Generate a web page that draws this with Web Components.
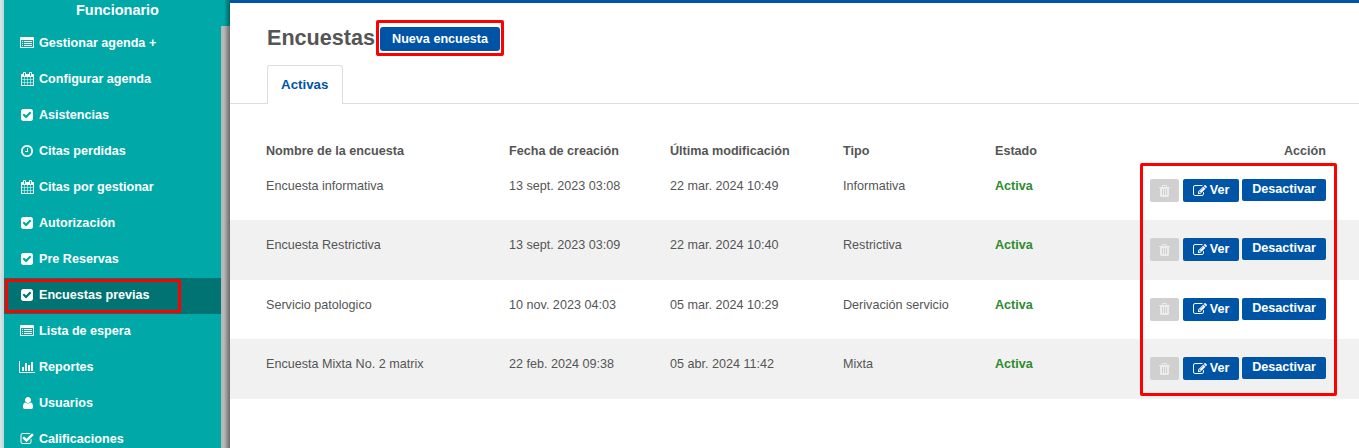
<!DOCTYPE html>
<html lang="es">
<head>
<meta charset="utf-8">
<title>Encuestas</title>
<style>
  html, body { margin: 0; height: 100%; overflow: hidden; }
  body { font-family: "Liberation Sans", Arial, sans-serif; background: #fff; }
</style>
</head>
<body>
<app-shell>
  <side-nav slot="side" heading="Funcionario">
    <nav-item icon="listAlt">Gestionar agenda +</nav-item>
    <nav-item icon="calendar">Configurar agenda</nav-item>
    <nav-item icon="checkSquare">Asistencias</nav-item>
    <nav-item icon="clock">Citas perdidas</nav-item>
    <nav-item icon="calendar">Citas por gestionar</nav-item>
    <nav-item icon="checkSquare">Autorización</nav-item>
    <nav-item icon="checkSquare">Pre Reservas</nav-item>
    <nav-item icon="checkSquare" active marked>Encuestas previas</nav-item>
    <nav-item icon="listAlt">Lista de espera</nav-item>
    <nav-item icon="barChart">Reportes</nav-item>
    <nav-item icon="user">Usuarios</nav-item>
    <nav-item icon="checkSquareO">Calificaciones</nav-item>
  </side-nav>
  <survey-page>
    <survey-row name="Encuesta informativa" created="13 sept. 2023 03:08" modified="22 mar. 2024 10:49" kind="Informativa"></survey-row>
    <survey-row shaded name="Encuesta Restrictiva" created="13 sept. 2023 03:09" modified="22 mar. 2024 10:40" kind="Restrictiva"></survey-row>
    <survey-row name="Servicio patologico" created="10 nov. 2023 04:03" modified="05 mar. 2024 10:29" kind="Derivación servicio"></survey-row>
    <survey-row shaded name="Encuesta Mixta No. 2 matrix" created="22 feb. 2024 09:38" modified="05 abr. 2024 11:42" kind="Mixta"></survey-row>
  </survey-page>
</app-shell>

<script>
// FontAwesome 4 shapes, redrawn as svg paths
const ICONS = {
  listAlt: [1792, "M384 1184v64q0 13-9.5 22.5t-22.5 9.5h-64q-13 0-22.5-9.5t-9.5-22.5v-64q0-13 9.5-22.5t22.5-9.5h64q13 0 22.5 9.5t9.5 22.5zm0-256v64q0 13-9.5 22.5t-22.5 9.5h-64q-13 0-22.5-9.5t-9.5-22.5v-64q0-13 9.5-22.5t22.5-9.5h64q13 0 22.5 9.5t9.5 22.5zm0-256v64q0 13-9.5 22.5t-22.5 9.5h-64q-13 0-22.5-9.5t-9.5-22.5v-64q0-13 9.5-22.5t22.5-9.5h64q13 0 22.5 9.5t9.5 22.5zm1152 512v64q0 13-9.5 22.5t-22.5 9.5h-960q-13 0-22.5-9.5t-9.5-22.5v-64q0-13 9.5-22.5t22.5-9.5h960q13 0 22.5 9.5t9.5 22.5zm0-256v64q0 13-9.5 22.5t-22.5 9.5h-960q-13 0-22.5-9.5t-9.5-22.5v-64q0-13 9.5-22.5t22.5-9.5h960q13 0 22.5 9.5t9.5 22.5zm0-256v64q0 13-9.5 22.5t-22.5 9.5h-960q-13 0-22.5-9.5t-9.5-22.5v-64q0-13 9.5-22.5t22.5-9.5h960q13 0 22.5 9.5t9.5 22.5zm128 704v-832q0-13-9.5-22.5t-22.5-9.5h-1472q-13 0-22.5 9.5t-9.5 22.5v832q0 13 9.5 22.5t22.5 9.5h1472q13 0 22.5-9.5t9.5-22.5zm128-1088v1088q0 66-47 113t-113 47h-1472q-66 0-113-47t-47-113v-1088q0-66 47-113t113-47h1472q66 0 113 47t47 113z"],
  calendar: [1664, "M128 1664h288v-288h-288v288zm352 0h320v-288h-320v288zm-352-352h288v-320h-288v320zm352 0h320v-320h-320v320zm-352-384h288v-288h-288v288zm736 736h320v-288h-320v288zm-384-736h320v-288h-320v288zm768 736h288v-288h-288v288zm-384-352h320v-320h-320v320zm-352-864v-288q0-13-9.5-22.5t-22.5-9.5h-64q-13 0-22.5 9.5t-9.5 22.5v288q0 13 9.5 22.5t22.5 9.5h64q13 0 22.5-9.5t9.5-22.5zm736 864h288v-320h-288v320zm-384-384h320v-288h-320v288zm384 0h288v-288h-288v288zm32-480v-288q0-13-9.5-22.5t-22.5-9.5h-64q-13 0-22.5 9.5t-9.5 22.5v288q0 13 9.5 22.5t22.5 9.5h64q13 0 22.5-9.5t9.5-22.5zm384-64v1280q0 52-38 90t-90 38h-1408q-52 0-90-38t-38-90v-1280q0-52 38-90t90-38h128v-96q0-66 47-113t113-47h64q66 0 113 47t47 113v96h384v-96q0-66 47-113t113-47h64q66 0 113 47t47 113v96h128q52 0 90 38t38 90z"],
  checkSquare: [1536, "M685 1299l614-614q19-19 19-45t-19-45l-102-102q-19-19-45-19t-45 19l-467 467-211-211q-19-19-45-19t-45 19l-102 102q-19 19-19 45t19 45l358 358q19 19 45 19t45-19zm851-883v960q0 119-84.5 203.5t-203.5 84.5h-960q-119 0-203.5-84.5t-84.5-203.5v-960q0-119 84.5-203.5t203.5-84.5h960q119 0 203.5 84.5t84.5 203.5z"],
  checkSquareO: [1792, "M1472 930v318q0 119-84.5 203.5t-203.5 84.5h-832q-119 0-203.5-84.5t-84.5-203.5v-832q0-119 84.5-203.5t203.5-84.5h832q63 0 117 25 15 7 18 23 3 17-9 29l-49 49q-10 10-23 10-3 0-9-2-23-6-45-6h-832q-66 0-113 47t-47 113v832q0 66 47 113t113 47h832q66 0 113-47t47-113v-254q0-13 9-22l64-64q10-10 23-10 6 0 12 3 20 8 20 29zm231-489l-814 814q-24 24-57 24t-57-24l-430-430q-24-24-24-57t24-57l110-110q24-24 57-24t57 24l263 263 647-647q24-24 57-24t57 24l110 110q24 24 24 57t-24 57z"],
  clock: [1536, "M896 544v448q0 14-9 23t-23 9h-320q-14 0-23-9t-9-23v-64q0-14 9-23t23-9h224v-352q0-14 9-23t23-9h64q14 0 23 9t9 23zm416 352q0-148-73-273t-198-198-273-73-273 73-198 198-73 273 73 273 198 198 273 73 273-73 198-198 73-273zm224 0q0 209-103 385.5t-279.5 279.5-385.5 103-385.5-103-279.5-279.5-103-385.5 103-385.5 279.5-279.5 385.5-103 385.5 103 279.5 279.5 103 385.5z"],
  barChart: [2048, "M640 896v512h-256v-512h256zm384-512v1024h-256v-1024h256zm1024 1152v128h-2048v-1536h128v1408h1920zm-640-896v768h-256v-768h256zm384-384v1152h-256v-1152h256z"],
  user: [1408, "M1408 1399q0 109-62.5 187t-150.5 78h-854q-88 0-150.5-78t-62.5-187q0-85 8.5-160.5t31.5-152 58.5-131 94-89 134.5-34.5q131 128 313 128t313-128q76 0 134.5 34.5t94 89 58.5 131 31.5 152 8.5 160.5zm-256-887q0 159-112.5 271.5t-271.5 112.5-271.5-112.5-112.5-271.5 112.5-271.5 271.5-112.5 271.5 112.5 112.5 271.5z"],
  trash: [1408, "M512 1376v-704q0-14-9-23t-23-9h-64q-14 0-23 9t-9 23v704q0 14 9 23t23 9h64q14 0 23-9t9-23zm256 0v-704q0-14-9-23t-23-9h-64q-14 0-23 9t-9 23v704q0 14 9 23t23 9h64q14 0 23-9t9-23zm256 0v-704q0-14-9-23t-23-9h-64q-14 0-23 9t-9 23v704q0 14 9 23t23 9h64q14 0 23-9t9-23zm-544-992h448l-48-117q-7-9-17-11h-317q-10 2-17 11zm928 32v64q0 14-9 23t-23 9h-96v948q0 83-47 143.5t-113 60.5h-832q-66 0-113-58.5t-47-141.5v-952h-96q-14 0-23-9t-9-23v-64q0-14 9-23t23-9h309l70-167q15-37 54-63t79-26h320q40 0 79 26t54 63l70 167h309q14 0 23 9t9 23z"],
  edit: [1792, "M888 1184l116-116-152-152-116 116v56h96v96h56zm440-720q-16-16-33 1l-350 350q-17 17-1 33t33-1l350-350q17-17 1-33zm80 594v190q0 119-84.5 203.5t-203.5 84.5h-832q-119 0-203.5-84.5t-84.5-203.5v-832q0-119 84.5-203.5t203.5-84.5h832q63 0 117 25 15 7 18 23 3 17-9 29l-49 49q-14 14-32 8-23-6-45-6h-832q-66 0-113 47t-47 113v832q0 66 47 113t113 47h832q66 0 113-47t47-113v-126q0-13 9-22l64-64q15-15 35-7t20 29zm-96-738l288 288-672 672h-288v-288zm444 132l-92 92-288-288 92-92q28-28 68-28t68 28l152 152q28 28 28 68t-28 68z"]
};

function iconSvg(name, size) {
  const [w, path] = ICONS[name];
  return `<svg style="flex:none" width="${size * w / 1792}" height="${size}" viewBox="0 0 ${w} 1792" fill="currentColor" aria-hidden="true"><path d="${path}"/></svg>`;
}

class AppShell extends HTMLElement {
  connectedCallback() {
    const root = this.attachShadow({ mode: "open" });
    root.innerHTML = `
      <style>
        :host { display: grid; grid-template-columns: 230px 1fr; height: 448px; overflow: hidden; }
        .main { min-width: 0; }
      </style>
      <slot name="side"></slot>
      <div class="main"><slot></slot></div>
    `;
  }
}

class SideNav extends HTMLElement {
  connectedCallback() {
    const root = this.attachShadow({ mode: "open" });
    root.innerHTML = `
      <style>
        :host {
          display: block;
          position: relative;
          height: 448px;
          overflow: hidden;
          box-sizing: border-box;
          padding-left: 4px;
          background: #00a9a7;
          color: #fff;
        }
        :host::before {
          content: "";
          position: absolute;
          left: 0; top: 0; bottom: 0;
          width: 4px;
          background: linear-gradient(to right, #d6e6e6, #bcd6d6);
        }
        h2 {
          margin: 0;
          height: 26px;
          width: 217px;
          box-sizing: border-box;
          padding-left: 10px;
          font-size: 14.5px;
          line-height: 20px;
          font-weight: bold;
          text-align: center;
        }
        .list { width: 217px; }
        .bar {
          position: absolute;
          right: 0; top: 26px; bottom: 0;
          width: 9px;
          background: #b8b8b8;
        }
        /* sombra del panel principal sobre el borde */
        .shade {
          position: absolute;
          right: 0; top: 0; bottom: 0;
          width: 6px;
          background: linear-gradient(to right, rgba(0,0,0,0), rgba(0,0,0,.42));
        }
      </style>
      <h2>${this.getAttribute("heading")}</h2>
      <div class="list"><slot></slot></div>
      <div class="bar"></div>
      <div class="shade"></div>
    `;
  }
}

class NavItem extends HTMLElement {
  connectedCallback() {
    const root = this.attachShadow({ mode: "open" });
    const marked = this.hasAttribute("marked");
    root.innerHTML = `
      <style>
        :host {
          display: flex;
          align-items: center;
          position: relative;
          box-sizing: border-box;
          height: 36px;
          padding-bottom: 2px;
          font-size: 12.6px;
          font-weight: bold;
          color: #fff;
        }
        :host([active]) { background: #007372; }
        .ico { width: 14px; margin: 0 5px 0 16px; flex: none; display: flex; align-items: center; justify-content: center; }
        .mark {
          position: absolute;
          left: 1px; top: 1px;
          width: 176px; height: 34px;
          box-sizing: border-box;
          border: 3px solid #f00;
        }
      </style>
      <span class="ico">${iconSvg(this.getAttribute("icon"), 14)}</span>
      <span><slot></slot></span>
      ${marked ? '<div class="mark"></div>' : ""}
    `;
  }
}

class SurveyPage extends HTMLElement {
  connectedCallback() {
    const root = this.attachShadow({ mode: "open" });
    root.innerHTML = `
      <style>
        :host {
          display: block;
          position: relative;
          height: 448px;
          box-sizing: border-box;
          border-top: 3px solid #0054a6;
          color: #555;
        }
        header {
          display: flex;
          align-items: flex-start;
          gap: 5px;
          height: 62px;
          padding-left: 37px;
        }
        h1 { margin: 21px 0 0; font-size: 21.6px; line-height: 28px; font-weight: bold; color: #555; }
        .new {
          position: relative;
          margin-top: 24px;
          box-sizing: border-box;
          padding-bottom: 1px;
          display: flex;
          align-items: center;
          justify-content: center;
          width: 120px;
          height: 24px;
          background: #0054a6;
          border-radius: 3px;
          color: #fff;
          font-size: 12.6px;
          font-weight: bold;
        }
        .new::after {
          content: "";
          position: absolute;
          inset: -7px -4px -5px;
          border: 3px solid #f00;
          border-radius: 2px;
        }
        .tabs { height: 38px; padding-left: 37px; border-bottom: 1px solid #ddd; }
        .tab {
          width: 75.5px;
          height: 39px;
          box-sizing: border-box;
          border: 1px solid #ddd;
          border-bottom: 0;
          border-radius: 3px 3px 0 0;
          background: #fff;
          display: flex;
          align-items: center;
          justify-content: center;
          padding-bottom: 1px;
          color: #0054a6;
          font-size: 13.3px;
          font-weight: bold;
        }
        .head {
          display: grid;
          grid-template-columns: 243px 161px 173px 152px 1fr;
          align-items: center;
          height: 20px;
          margin-top: 37px;
          padding: 0 33px 0 36px;
          font-size: 12.6px;
          font-weight: bold;
        }
        .head .end { display: flex; justify-content: space-between; }
        .outline {
          position: absolute;
          left: 910px; top: 160px;
          width: 197px; height: 233px;
          box-sizing: border-box;
          border: 3px solid #f00;
          border-radius: 2px;
          pointer-events: none;
        }
      </style>
      <header><h1>Encuestas</h1><div class="new">Nueva encuesta</div></header>
      <div class="tabs"><div class="tab">Activas</div></div>
      <div class="head">
        <div>Nombre de la encuesta</div><div>Fecha de creación</div><div>Última modificación</div><div>Tipo</div>
        <div class="end"><span>Estado</span><span>Acción</span></div>
      </div>
      <slot></slot>
      <div class="outline"></div>
    `;
  }
}

class SurveyRow extends HTMLElement {
  connectedCallback() {
    const root = this.attachShadow({ mode: "open" });
    const a = (n) => this.getAttribute(n);
    root.innerHTML = `
      <style>
        :host {
          display: grid;
          grid-template-columns: 243px 161px 173px 152px 1fr;
          height: 59.67px;
          padding: 0 33px 0 36px;
          font-size: 12.6px;
          color: #555;
        }
        :host(:first-child) { height: 59px; }
        :host([shaded]) { background: #f1f1f1; }
        .cell { padding-top: 18px; line-height: 15px; }
        .state { color: #2e8b2e; font-weight: bold; }
        .last { display: flex; justify-content: space-between; }
        .acts { display: flex; gap: 3px; align-items: flex-start; }
        .btn {
          box-sizing: border-box;
          display: flex;
          align-items: center;
          justify-content: center;
          gap: 3px;
          height: 23px;
          border-radius: 2px;
          background: #0054a6;
          color: #fff;
          font-weight: bold;
        }
        .del { width: 29px; background: #d0d0d0; color: #ececec; margin-right: 1px; }
        .ver { width: 56px; }
        .off { width: 84px; height: 22px; padding-bottom: 1px; }
      </style>
      <div class="cell">${a("name")}</div>
      <div class="cell">${a("created")}</div>
      <div class="cell">${a("modified")}</div>
      <div class="cell">${a("kind")}</div>
      <div class="cell last">
        <span class="state">Activa</span>
        <div class="acts">
          <div class="btn del">${iconSvg("trash", 14)}</div>
          <div class="btn ver">${iconSvg("edit", 14)}<span>Ver</span></div>
          <div class="btn off">Desactivar</div>
        </div>
      </div>
    `;
  }
}

customElements.define("app-shell", AppShell);
customElements.define("side-nav", SideNav);
customElements.define("nav-item", NavItem);
customElements.define("survey-page", SurveyPage);
customElements.define("survey-row", SurveyRow);
</script>
</body>
</html>
